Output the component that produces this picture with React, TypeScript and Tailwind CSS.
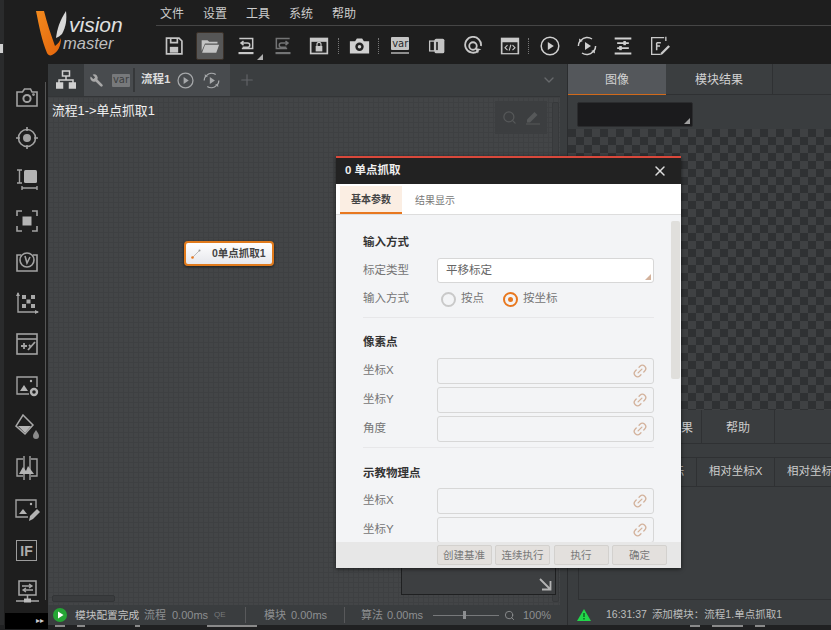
import type { ReactNode } from "react";
import { ChevronDown, Plus, Search, X, Wrench, Link2 } from "lucide-react";

const FONT = "font-['Liberation_Sans','Noto_Sans_CJK_SC',sans-serif]";

function Ico({ children, size = 24, box = 24 }: { children: ReactNode; size?: number; box?: number }) {
  return (
    <svg width={size} height={size} viewBox={`0 0 ${box} ${box}`} fill="none" stroke="#a2a2a2" strokeWidth="1.6">
      {children}
    </svg>
  );
}

function PlayCircle({ size = 20, color = "#c4c4c4" }: { size?: number; color?: string }) {
  return (
    <svg width={size} height={size} viewBox="0 0 20 20" fill="none" stroke={color} strokeWidth="1.5">
      <circle cx="10" cy="10" r="8.8" />
      <path d="M7.8 6l6 4-6 4z" fill={color} stroke="none" />
    </svg>
  );
}

function ReplayCircle({ size = 20, color = "#c4c4c4" }: { size?: number; color?: string }) {
  return (
    <svg width={size} height={size} viewBox="0 0 20 20" fill="none" stroke={color} strokeWidth="1.5">
      <path d="M4 4.2A8.6 8.6 0 0 1 15 3M16 15.8A8.6 8.6 0 0 1 5 17M1.4 10a8.6 8.6 0 0 1 1.6-5M18.6 10a8.6 8.6 0 0 1-1.6 5" />
      <path d="M2 2.5l.4 4 3.4-1.4zM18 17.5l-.4-4-3.4 1.4z" fill={color} stroke="none" />
      <path d="M8 6l6 4-6 4z" fill={color} stroke="none" />
    </svg>
  );
}

function VarBadge({ dim = false }: { dim?: boolean }) {
  return (
    <span className={`flex h-[13px] w-[18px] items-center justify-center rounded-[1px] text-[10px] leading-none font-['DejaVu_Sans',sans-serif] ${dim ? "bg-[#77797b] text-[#3d3f41]" : "bg-[#c4c4c4] text-[#2a2a2a]"}`}>
      var
    </span>
  );
}

const toolbarItems: (ReactNode | "sep")[] = [
  <svg width="20" height="20" viewBox="0 0 24 24" fill="none" stroke="#c4c4c4" strokeWidth="2"><path d="M3 2.500h15l3.500 3.500v15.500H3z" /><path d="M8 3v5h8V3" /><rect x="7" y="13" width="10" height="7" fill="#c4c4c4" stroke="none" /></svg>,
  <svg width="20" height="20" viewBox="0 0 24 24" fill="#c4c4c4"><path d="M2 5h7l2 2h10v2H6l-4 9z" /><path d="M6 10.500h17l-3.500 9.500H2.500z" /></svg>,
  <svg width="20" height="20" viewBox="0 0 24 24" fill="none" stroke="#c8c8c8" strokeWidth="1.800"><path d="M4 3h16v12H7" /><path d="M9 6L6 8.500 9 11M6 8.500h8a2.500 2.500 0 0 1 0 5H8" /><path d="M3 20.500h18" strokeWidth="2.600" /></svg>,
  <svg width="20" height="20" viewBox="0 0 24 24" fill="none" stroke="#737475" strokeWidth="1.800"><path d="M20 3H4v12h13" /><path d="M15 6l3 2.500-3 2.500M18 8.500h-8a2.500 2.500 0 0 0 0 5h6" /><path d="M3 20.500h18" strokeWidth="2.600" /></svg>,
  <svg width="20" height="20" viewBox="0 0 24 24"><rect x="1" y="2" width="22" height="20" fill="#c8c8c8" /><rect x="3" y="7" width="18" height="13" fill="#222" /><rect x="8" y="12" width="8" height="6.500" fill="#c8c8c8" /><path d="M9.600 12V10a2.400 2.400 0 0 1 4.800 0v2" fill="none" stroke="#c8c8c8" strokeWidth="1.400" /></svg>,
  "sep",
  <svg width="21" height="21" viewBox="0 0 24 24"><path d="M1 7h6l2-3h6l2 3h6v14H1z" fill="#d0d0d0" /><circle cx="12" cy="13.500" r="4.800" fill="#222" /><circle cx="12" cy="13.500" r="2" fill="#d0d0d0" /></svg>,
  "sep",
  <span className="flex flex-col items-center gap-[2px]"><VarBadge /><span className="h-[2px] w-[18px] bg-[#8f8f8f]" /></span>,
  <svg width="18" height="20" viewBox="0 0 22 24"><rect x="2" y="6" width="6" height="12" fill="none" stroke="#c4c4c4" strokeWidth="1.600" /><rect x="8" y="3" width="12" height="18" rx="2" fill="#c4c4c4" /><rect x="10" y="7" width="2" height="10" fill="#222" /></svg>,
  <svg width="20" height="20" viewBox="0 0 24 24" fill="none" stroke="#c8c8c8" strokeWidth="2.200"><path d="M18 18A9.500 9.500 0 1 1 21.500 12" /><circle cx="12" cy="12" r="4.500" /><path d="M14 14l8 2-3 1.400L18 21z" fill="#c8c8c8" stroke="none" /></svg>,
  <svg width="20" height="20" viewBox="0 0 24 24"><rect x="1" y="2" width="22" height="20" fill="#c8c8c8" /><rect x="3" y="7.500" width="18" height="13" fill="#222" /><path d="M9 11l-3 3 3 3M15 11l3 3-3 3M13 10.500l-2 7" fill="none" stroke="#c8c8c8" strokeWidth="1.300" /></svg>,
  "sep",
  <PlayCircle size={20} color="#d0d0d0" />,
  <ReplayCircle size={20} color="#d0d0d0" />,
  <svg width="20" height="20" viewBox="0 0 24 24" fill="none" stroke="#d0d0d0"><path d="M2 3h20M2 21h20" strokeWidth="2.400" /><path d="M5 8.500h14M5 14.500h14" strokeWidth="2" /><rect x="13" y="6.500" width="2" height="4" fill="#d0d0d0" /><rect x="8" y="12.500" width="2" height="4" fill="#d0d0d0" /></svg>,
  <svg width="20" height="20" viewBox="0 0 24 24" fill="none" stroke="#c9c9c9" strokeWidth="1.600"><path d="M17 2H2v20h10" /><path d="M8 8v9M8 8h5M8 12h4" strokeWidth="1.800" /><path d="M13 20l-1 3 3-1 9-9-2-2z" fill="#c9c9c9" stroke="none" /><path d="M19 1v5" /></svg>,
];

const sideIcons: ReactNode[] = [
  <Ico><path d="M2 7h5.500l2-3h6l1.500 3h5v14H2z" /><circle cx="12" cy="13.500" r="3.600" strokeWidth="2" /><circle cx="18.500" cy="9.600" r=".6" /></Ico>,
  <Ico><circle cx="12" cy="12" r="8.500" /><circle cx="12" cy="12" r="3.200" fill="#a2a2a2" /><path d="M12 1v4M12 19v4M1 12h4M19 12h4" /></Ico>,
  <svg width="24" height="24" viewBox="0 0 24 24" fill="none" stroke="#a2a2a2" strokeWidth="1.400"><path d="M2 3h5M4.500 3v13M2 16h5M7 21h15M7 19v4M22 19v4" /><rect x="9" y="3" width="13" height="13" rx="1.500" fill="#b4b4b4" stroke="none" /></svg>,
  <Ico><path d="M2 7V2h5M17 2h5v5M22 17v5h-5M7 22H2v-5" /><rect x="7.500" y="7.500" width="9" height="9" fill="#b4b4b4" stroke="none" /></Ico>,
  <Ico><path d="M6 5H2v16h20V5h-4" /><circle cx="12" cy="10" r="7" /><path d="M10 6l2 7 3-6" /></Ico>,
  <svg width="24" height="24" viewBox="0 0 24 24" fill="#a8a8a8"><path d="M3 2v19h20" fill="none" stroke="#a2a2a2" strokeWidth="1.400" /><path d="M1 5l2-4 2 4zM20 19l4 2-4 2z" /><rect x="7" y="4" width="4" height="4" /><rect x="16" y="4" width="4" height="4" /><rect x="11.500" y="8.500" width="4" height="4" /><rect x="7" y="13" width="4" height="4" /><rect x="16" y="13" width="4" height="4" /></svg>,
  <Ico><rect x="2" y="2" width="20" height="20" /><path d="M2 7h20" /><path d="M6 14h6M9 11v6M13 18l7-8M14 13l2 2" strokeWidth="1.800" /></Ico>,
  <svg width="24" height="24" viewBox="0 0 24 24" fill="none" stroke="#a2a2a2" strokeWidth="1.400"><path d="M14 20H2V3h20v10" /><path d="M5 17l4-6 4 6z" fill="#b4b4b4" stroke="none" /><circle cx="16" cy="7" r="1.200" fill="#b4b4b4" stroke="none" /><circle cx="19" cy="18" r="3" strokeWidth="2.400" stroke="#b4b4b4" /></svg>,
  <svg width="26" height="26" viewBox="0 0 26 26" fill="none" stroke="#a8a8a8" strokeWidth="1.500"><path d="M9 1l10 10-8 9L2 12z" /><path d="M4 12h13l-6 7z" fill="#b4b4b4" stroke="none" /><path d="M22 16c2 3 3 4 3 6a3 3 0 0 1-6 0c0-2 1-3 3-6z" fill="#8a8a8a" stroke="none" /></svg>,
  <svg width="24" height="24" viewBox="0 0 24 24" fill="none" stroke="#a2a2a2" strokeWidth="1.400"><path d="M8 3H2v17h6M16 3h6v17h-6" /><path d="M9 0v24M15 0v24" /><path d="M4 18l4-7 3 4 2-5 6 8z" fill="#b4b4b4" stroke="none" /></svg>,
  <svg width="26" height="24" viewBox="0 0 26 24" fill="none" stroke="#a2a2a2" strokeWidth="1.400"><path d="M14 19H2V2h20v8" /><path d="M5 16l4-5 4 5z" fill="#b4b4b4" stroke="none" /><circle cx="17" cy="6" r="1.200" fill="#b4b4b4" stroke="none" /><path d="M15 23l1-5 7-7 3 3-7 7z" fill="#b4b4b4" stroke="none" /></svg>,
  <span className="flex h-[21px] w-[21px] items-center justify-center border-[1.5px] border-[#9c9c9c] text-[14px] font-bold leading-none text-[#adadad] font-['Liberation_Sans',sans-serif]">IF</span>,
  <svg width="24" height="24" viewBox="0 0 24 24" fill="none" stroke="#a8a8a8" strokeWidth="1.500"><rect x="4" y="1" width="17" height="14" /><path d="M7 6h10M14 4l3 2-3 2M18 10H8M11 8l-3 2 3 2" strokeWidth="1.300" /><path d="M12.500 15v4M1 21h23" /><rect x="9" y="18.500" width="7" height="4" fill="#bcbcbc" stroke="none" /></svg>,
];

function LinkIcon() {
  return <Link2 className="-rotate-45 text-[#d3b29c]" size={16} strokeWidth={2} />;
}

function Field({ label, y }: { label: string; y?: boolean }) {
  return (
    <div className={`flex items-center ${y ? "mt-[3px]" : ""}`}>
      <span className="w-[74px] text-[11.5px] text-[#757575]">{label}</span>
      <span className="flex h-[26px] w-[217px] items-center justify-end rounded-[3px] border border-[#d7d7d7] pr-[5px]">
        <LinkIcon />
      </span>
    </div>
  );
}

function FooterBtn({ text }: { text: string }) {
  return (
    <button className="h-[20px] w-[55px] rounded-[2px] border border-[#d3d1ce] bg-[#e3e0dd] text-[10.5px] leading-none text-[#787878]">
      {text}
    </button>
  );
}

function Modal() {
  return (
    <div className="absolute left-[336px] top-[156px] flex h-[412px] w-[345px] flex-col overflow-hidden bg-[#f3f4f6] shadow-[0_1px_4px_rgba(0,0,0,0.6)]">
      <div className="h-[2px] bg-[#d9483b]" />
      <div className="flex h-[26px] items-center justify-between bg-[#222222] pl-[9px] pr-[13px]">
        <span className="text-[11.5px] font-bold text-[#eeeeee]">0 单点抓取</span>
        <X size={16} strokeWidth={2.2} className="text-[#dddddd]" />
      </div>
      <div className="flex h-[31px] border-b border-[#dddddd] bg-white pl-[4px] pt-[2px]">
        <span className="flex w-[62px] items-center justify-center border-b-2 border-[#e8781f] bg-[#fbeee3] text-[10px] font-bold text-[#444444]">基本参数</span>
        <span className="flex w-[66px] items-center justify-center text-[10px] text-[#777777]">结果显示</span>
      </div>
      <div className="relative min-h-0 flex-1 overflow-hidden pl-[27px] pt-[19px]">
        <span className="absolute right-[1px] top-[6px] h-[158px] w-[9px] rounded-[2px] bg-[#e0dfdc]" />
        <h3 className="text-[11.5px] font-bold leading-[16px] text-[#333333]">输入方式</h3>
        <div className="mt-[8px] flex items-center">
          <span className="w-[74px] text-[11.5px] text-[#757575]">标定类型</span>
          <span className="relative flex h-[25px] w-[217px] items-center rounded-[3px] border border-[#d7d7d7] bg-white pl-[8px] text-[11.5px] text-[#666666]">
            平移标定
            <span className="absolute bottom-[2px] right-[2px] h-0 w-0 border-b-[6px] border-l-[6px] border-b-[#d3b29c] border-l-transparent" />
          </span>
        </div>
        <div className="mt-[6px] flex h-[20px] items-center text-[11.5px] text-[#757575]">
          <span className="w-[78px]">输入方式</span>
          <span className="h-[15px] w-[15px] rounded-full border-2 border-[#c9c9c9]" />
          <span className="ml-[5px] w-[42px]">按点</span>
          <span className="flex h-[15px] w-[15px] items-center justify-center rounded-full border-2 border-[#e8781f]">
            <span className="h-[5px] w-[5px] rounded-full bg-[#e8781f]" />
          </span>
          <span className="ml-[5px]">按坐标</span>
        </div>
        <div className="mr-[27px] mt-[8px] h-px bg-[#e7e7e9]" />
        <h3 className="mt-[16px] text-[11.5px] font-bold leading-[16px] text-[#333333]">像素点</h3>
        <div className="mt-[8px]"><Field label="坐标X" /></div>
        <Field label="坐标Y" y />
        <Field label="角度" y />
        <div className="mr-[27px] mt-[5px] h-px bg-[#e7e7e9]" />
        <h3 className="mt-[17px] text-[11.5px] font-bold leading-[16px] text-[#333333]">示教物理点</h3>
        <div className="mt-[7px]"><Field label="坐标X" /></div>
        <Field label="坐标Y" y />
      </div>
      <div className="flex h-[26px] shrink-0 items-center justify-end gap-[3.5px] bg-[#e7e7e7] pr-[14px]">
        <FooterBtn text="创建基准" />
        <FooterBtn text="连续执行" />
        <FooterBtn text="执行" />
        <FooterBtn text="确定" />
      </div>
    </div>
  );
}

function Logo() {
  return (
    <div className="flex w-[156px] shrink-0 items-center pl-[34px] pt-[2px]">
      <svg width="36" height="50" viewBox="0 0 36 50">
        <defs>
          <linearGradient id="vg" x1="0" y1="0" x2="1" y2="1">
            <stop offset="0" stopColor="#f28a1e" />
            <stop offset="1" stopColor="#e4650c" />
          </linearGradient>
        </defs>
        <path d="M2 3h8c3 12 7 24 11 35 3-2 5-5 6-8 0 8-3 14-9 17-2 1-4 0-5-2C8 33 5 18 2 3z" fill="url(#vg)" />
        <path d="M22 30c1-9 4-18 10-27 1 8 0 16-4 23-2 2-4 3-6 4z" fill="#d8d8d8" />
      </svg>
      <div className="-ml-[4px] flex flex-col font-['Liberation_Sans',sans-serif] italic leading-none text-[#e0e0e0]">
        <span className="ml-[3px] text-[21px] leading-[24px]">vision</span>
        <span className="-ml-[3px] -mt-[3px] text-[16.5px] leading-[19px] text-[#bdbdbd]">master</span>
      </div>
    </div>
  );
}

function Header() {
  return (
    <header className="flex h-[64px] shrink-0 bg-[#1e1e1e]">
      <Logo />
      <div className="flex min-w-0 flex-1 flex-col">
        <nav className="flex h-[26px] shrink-0 items-center gap-[19px] border-b border-[#464646] pl-[4px] pt-[2px] text-[12px] text-[#cccccc]">
          {["文件", "设置", "工具", "系统", "帮助"].map((m) => (
            <span key={m}>{m}</span>
          ))}
        </nav>
        <div className="flex flex-1 items-center pl-[1px] pt-[1px]">
          {toolbarItems.map((it, i) =>
            it === "sep" ? (
              <span key={i} className="h-[16px] w-[4px] border-l border-dotted border-[#777777] pl-[1px]" />
            ) : i === 1 ? (
              <span key={i} className="flex h-[28px] w-[36.5px] items-center justify-center">
                <span className="flex h-[28px] w-[28px] items-center justify-center rounded-[2px] border border-[#3a3028] bg-[#565656]">{it}</span>
              </span>
            ) : (
              <span key={i} className={`relative flex h-[28px] items-center justify-center ${i === 0 ? "w-[34.5px]" : "w-[36.5px]"}`}>
                {it}
                {i === 2 && <span className="absolute bottom-0 right-[2px] h-0 w-0 border-b-[6px] border-l-[6px] border-b-[#b0b0b0] border-l-transparent" />}
              </span>
            )
          )}
        </div>
      </div>
    </header>
  );
}

function Sidebar() {
  return (
    <aside className="relative flex w-[44px] shrink-0 flex-col bg-[#1e1e1e]">
      <span className="absolute bottom-[25px] right-[2px] top-[18px] w-[1px] bg-[#555555]" />
      <div className="flex flex-1 flex-col pl-[1px] pt-[12px]">
        {sideIcons.map((ic, i) => (
          <span key={i} className="flex h-[41.3px] shrink-0 items-center justify-center">{ic}</span>
        ))}
      </div>
      <div className="ml-[1px] flex h-[16px] shrink-0 items-center justify-end bg-black pr-[4px] text-[8px] leading-none text-[#cccccc]">▸▸</div>
    </aside>
  );
}

function Canvas() {
  return (
    <section className="flex w-[512px] shrink-0 flex-col">
      <div className="flex h-[33px] shrink-0 items-center border-b border-[#333537] bg-[#3b3e40]">
        <span className="flex h-full w-[36px] items-center justify-center bg-[#36393b]">
          <svg width="20" height="20" viewBox="0 0 20 20" fill="none" stroke="#d0d0d0" strokeWidth="1.500">
            <rect x="6.500" y="1" width="7" height="5" />
            <path d="M10 6v4M3 13v-3h14v3" />
            <rect x="0.500" y="13" width="6" height="5" fill="#d0d0d0" />
            <rect x="13.500" y="13" width="6" height="5" fill="#d0d0d0" />
          </svg>
        </span>
        <div className="flex h-full w-[146px] items-center bg-[#484b4e]">
          <Wrench size={15} strokeWidth={0} fill="#a8a8a8" className="ml-[5px] -scale-x-100" />
          <span className="ml-[8px]"><VarBadge dim /></span>
          <span className="ml-[3px] h-[24px] w-[2px] bg-[#36383a]" />
          <span className="ml-[6px] text-[11.5px] font-bold text-[#dddddd]">流程1</span>
          <span className="ml-[7px]"><PlayCircle size={17} color="#a6a8aa" /></span>
          <span className="ml-[9px]"><ReplayCircle size={17} color="#a6a8aa" /></span>
        </div>
        <Plus size={18} strokeWidth={1.5} className="ml-[8px] text-[#626568]" />
        <ChevronDown size={16} className="ml-auto mr-[3px] text-[#66696b]" />
      </div>
      <div className="relative min-h-0 flex-1 overflow-hidden bg-[#434547] bg-[linear-gradient(#3e4042_1px,transparent_1px),linear-gradient(90deg,#3e4042_1px,transparent_1px)] bg-[size:5px_5px]">
        <p className="absolute left-[4px] top-[5px] text-[12.8px] leading-[17px] text-[#f0f0f0]">流程1-&gt;单点抓取1</p>
        <div className="absolute left-[447px] top-[4px] flex h-[33px] w-[52px] items-center justify-center gap-[9px] bg-[#3c3e40]">
          <Search size={15} className="text-[#565859]" />
          <svg width="14" height="15" viewBox="0 0 14 15" fill="#565859">
            <path d="M1 9.500L8.500 2l3 3L4 12.500H1z" />
            <rect x="0" y="13.500" width="14" height="1" />
          </svg>
        </div>
        <span className="absolute right-[1px] top-[5px] h-[500px] w-[7px] rounded-[2px] border border-[#37393b] bg-[#3d3f41]" />
        <div className="absolute left-[136px] top-[144px] flex h-[25px] w-[90px] items-center rounded-[4px] border-2 border-[#e07a1c] bg-[linear-gradient(#ffffff,#e6e7ec)] pl-[5px] shadow-[0_1px_3px_rgba(0,0,0,0.6)]">
          <svg width="10" height="10" viewBox="0 0 10 10" stroke="#bbbbbb" strokeWidth="1" fill="#e8781f">
            <path d="M1.500 8.500l7-7" />
            <circle cx="1.500" cy="8.500" r="1.300" stroke="none" />
            <circle cx="8.500" cy="1.500" r="1" stroke="none" fill="#999999" />
          </svg>
          <span className="ml-[11px] text-[10.5px] font-bold text-[#444444]">0单点抓取1</span>
        </div>
        <div className="absolute bottom-[10px] left-[353px] h-[40px] w-[155px] border border-[#1f2021] bg-[#3d3f41]">
          <svg width="14" height="14" viewBox="0 0 14 14" fill="none" stroke="#b4b4b4" strokeWidth="1.800" className="absolute bottom-[3px] right-[3px]">
            <path d="M2 2l10 10M4 12.500h8.500V4" />
          </svg>
        </div>
        <span className="absolute bottom-[3px] left-[4px] h-[7px] w-[63px] rounded-[2px] border border-[#333537] bg-[#3a3c3e]" />
      </div>
      <div className="flex h-[20px] shrink-0 items-center whitespace-nowrap bg-[#3a3d3f] text-[11px] text-[#8d8f91]">
        <svg width="14" height="14" viewBox="0 0 14 14" className="ml-[5px]">
          <circle cx="7" cy="7" r="7" fill="#25a535" />
          <path d="M5 3.500l5.500 3.500L5 10.500z" fill="#ffffff" />
        </svg>
        <span className="ml-[8px] w-[69px] text-[10.7px] text-[#c4c4c4]">模块配置完成</span>
        <span className="w-[28px]">流程</span>
        <span className="w-[42px]">0.00ms</span>
        <span className="w-[31px] text-[8px] text-[#77797b]">QE</span>
        <span className="h-[16px] w-px bg-[#58595b]" />
        <span className="ml-[18px] w-[27px]">模块</span>
        <span className="w-[53px]">0.00ms</span>
        <span className="h-[16px] w-px bg-[#58595b]" />
        <span className="ml-[16px] w-[26px]">算法</span>
        <span className="w-[46px]">0.00ms</span>
        <span className="relative flex h-[12px] w-[66px] items-center">
          <span className="h-px w-full bg-[#77797b]" />
          <span className="absolute left-[30px] h-[8px] w-[3px] bg-[#8d8f91]" />
        </span>
        <Search size={11} className="ml-[5px] text-[#8d8f91]" />
        <span className="ml-[8px]">100%</span>
      </div>
    </section>
  );
}

function RightPanel() {
  return (
    <section className="flex min-w-0 flex-1 flex-col overflow-hidden bg-[#3a3d3f]">
      <div className="flex h-[31px] shrink-0 text-[12px] text-[#d2d2d2]">
        <span className="flex w-[98px] items-center justify-center border-b-[1.500px] border-[#d16a1c] bg-[#54575b] pt-[2px]">图像</span>
        <span className="flex w-[107px] items-center justify-center border-b border-r border-[#2f3133] bg-[#3b3e40] pt-[2px]">模块结果</span>
        <span className="flex-1 border-b border-[#2f3133]" />
      </div>
      <div className="h-[34px] shrink-0 pl-[9px] pt-[7px]">
        <div className="relative h-[25px] w-[116px] rounded-[2px] border border-[#2b2c2e] bg-[#1b1b1d]">
          <span className="absolute bottom-[2px] right-[2px] h-0 w-0 border-b-[6px] border-l-[6px] border-b-[#a0a0a0] border-l-transparent" />
        </div>
      </div>
      <div className="h-[281px] shrink-0 bg-[#343638] bg-[conic-gradient(#3f4143_25%,#2f3133_0_50%,#3f4143_0_75%,#2f3133_0)] bg-[size:16px_16px]" />
      <div className="flex h-[34px] shrink-0 border-b border-[#2f3133] text-[12px] text-[#cccccc]">
        <span className="flex w-[134px] items-center justify-end border-r border-[#2f3133] pr-[8px] pt-[2px]">模块结果</span>
        <span className="flex w-[73px] items-center justify-center border-r border-[#2f3133] pt-[2px]">帮助</span>
      </div>
      <div className="mt-[13px] flex h-[30px] shrink-0 border-b border-t border-[#2f3133] text-[12px] text-[#cccccc]">
        <span className="flex w-[129px] shrink-0 items-center justify-end border-r border-[#2f3133] pr-[12px]">坐标</span>
        <span className="flex w-[78px] shrink-0 items-center justify-center border-r border-[#2f3133] text-[11.5px]">相对坐标X</span>
        <span className="flex w-[60px] shrink-0 items-center overflow-hidden whitespace-nowrap pl-[12px] text-[11.5px]">相对坐标Y</span>
      </div>
      <div className="ml-[10px] min-h-0 flex-1 border-b border-l border-[#2f3133]" />
      <div className="mb-0 mt-[5px] flex h-[20px] shrink-0 items-center whitespace-nowrap text-[10.5px] text-[#bdbdbd]">
        <svg width="14" height="12" viewBox="0 0 14 12" className="ml-[9px]">
          <path d="M7 0l7 12H0z" fill="#22d64a" />
          <path d="M6.300 4h1.400v4H6.300zM6.300 9h1.400v1.400H6.300z" fill="#0c5f20" />
        </svg>
        <span className="ml-[15px]">16:31:37</span>
        <span className="ml-[5px]">添加模块：流程1.单点抓取1</span>
      </div>
    </section>
  );
}

// slivers of a window behind the app, showing under the status bar
const slivers: [number, number][] = [[55, 10], [12, 8], [50, 5], [67, 50], [433, 10], [12, 31], [12, 10]];

export default function App() {
  return (
    <div className={`relative flex h-[630px] w-[831px] flex-col overflow-hidden bg-[#1e1e1e] ${FONT}`}>
      <Header />
      <div className="flex min-h-0 flex-1">
        <span className="w-[4px] shrink-0 bg-[#2a2b2c]" />
        <Sidebar />
        <Canvas />
        <span className="w-[8px] shrink-0 border-r border-[#2b2d2f] bg-[#3a3d3f]" />
        <RightPanel />
      </div>
      <div className="flex h-[5px] shrink-0 bg-[#202122]">
        {slivers.map(([gap, w], i) => (
          <span key={i} className="h-[2px] bg-[#8a8a8a]" style={{ marginLeft: gap, width: w }} />
        ))}
      </div>
      <span className="absolute left-0 top-0 h-[64px] w-[4px] bg-[#2a2b2c]" />
      <span className="absolute left-0 top-[44px] h-[9px] w-[3px] bg-[#d0d0d0]" />
      <Modal />
    </div>
  );
}
